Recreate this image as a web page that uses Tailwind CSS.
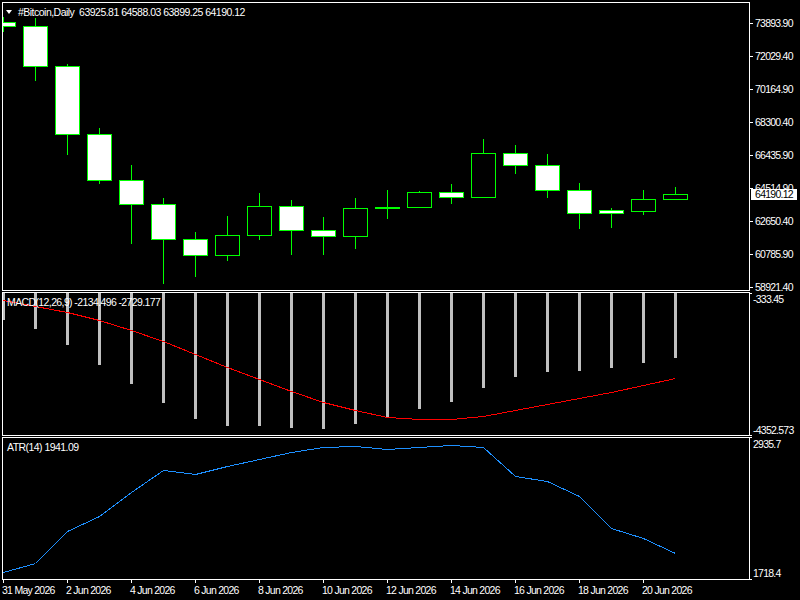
<!DOCTYPE html>
<html lang="en">
<head>
    <meta charset="UTF-8">
    <title>#Bitcoin,Daily</title>
    <script src="https://cdn.jsdelivr.net/npm/@tailwindcss/browser@4"></script>
</head>
<body class="bg-black">
    <div class="w-[800px] h-[600px] bg-black pt-[2px] text-white text-[10.5px] leading-none tracking-[-0.55px] font-['Liberation_Sans',sans-serif] overflow-hidden">

        <!-- Price panel -->
        <div class="flex h-[289px] mb-px">
            <div class="relative w-[748px] ml-[2px] border border-white">
                <div class="absolute left-[3px] top-[4px] flex items-center gap-[6px] whitespace-pre tracking-[-0.52px]">
                    <span class="w-0 h-0 border-x-[3.5px] border-x-transparent border-t-[4px] border-t-white"></span>
                    <span>#Bitcoin,Daily  63925.81 64588.03 63899.25 64190.12</span>
                </div>
                <svg width="746" height="287" viewBox="3 3 746 287" shape-rendering="crispEdges" class="block">
                    <path stroke="#00ff00" fill="none" d="M3.5 17V32M35.5 18V81M67.5 64V155M99.5 128V184M131.5 165V244M163.5 198V284M195.5 232V277M227.5 216V261M259.5 193V240M291.5 200V255M323.5 217V255M355.5 198V249M387.5 190V219M419.5 191V208M451.5 184V204M483.5 139V198M515.5 145V174M547.5 154V198M579.5 183V229M611.5 208V228M643.5 190V215M675.5 187V200"/>
                    <g stroke="#00ff00" fill="#ffffff">
                        <rect x="-8.5" y="22.5" width="24" height="4"/>
                        <rect x="23.5" y="26.5" width="24" height="40"/>
                        <rect x="55.5" y="66.5" width="24" height="68"/>
                        <rect x="87.5" y="134.5" width="24" height="46"/>
                        <rect x="119.5" y="180.5" width="24" height="24"/>
                        <rect x="151.5" y="204.5" width="24" height="35"/>
                        <rect x="183.5" y="239.5" width="24" height="16"/>
                        <rect x="279.5" y="206.5" width="24" height="24"/>
                        <rect x="311.5" y="230.5" width="24" height="6"/>
                        <rect x="439.5" y="192.5" width="24" height="5"/>
                        <rect x="503.5" y="153.5" width="24" height="12"/>
                        <rect x="535.5" y="165.5" width="24" height="25"/>
                        <rect x="567.5" y="190.5" width="24" height="23"/>
                        <rect x="599.5" y="210.5" width="24" height="3"/>
                    </g>
                    <g stroke="#00ff00" fill="#000000">
                        <rect x="215.5" y="235.5" width="24" height="20"/>
                        <rect x="247.5" y="206.5" width="24" height="29"/>
                        <rect x="343.5" y="208.5" width="24" height="28"/>
                        <rect x="375.5" y="207.5" width="24" height="1"/>
                        <rect x="407.5" y="192.5" width="24" height="15"/>
                        <rect x="471.5" y="153.5" width="24" height="44"/>
                        <rect x="631.5" y="199.5" width="24" height="12"/>
                        <rect x="663.5" y="194.5" width="24" height="5"/>
                    </g>
                </svg>
            </div>
            <div class="relative flex-1 pt-[5px] tracking-[-0.75px]">
                <div class="flex items-center h-[33px] gap-[2px]"><span class="w-[3px] h-px bg-white"></span><span>73893.90</span></div>
                <div class="flex items-center h-[33px] gap-[2px]"><span class="w-[3px] h-px bg-white"></span><span>72029.40</span></div>
                <div class="flex items-center h-[33px] gap-[2px]"><span class="w-[3px] h-px bg-white"></span><span>70164.90</span></div>
                <div class="flex items-center h-[33px] gap-[2px]"><span class="w-[3px] h-px bg-white"></span><span>68300.40</span></div>
                <div class="flex items-center h-[33px] gap-[2px]"><span class="w-[3px] h-px bg-white"></span><span>66435.90</span></div>
                <div class="flex items-center h-[33px] gap-[2px]"><span class="w-[3px] h-px bg-white"></span><span>64514.90</span></div>
                <div class="flex items-center h-[33px] gap-[2px]"><span class="w-[3px] h-px bg-white"></span><span>62650.40</span></div>
                <div class="flex items-center h-[33px] gap-[2px]"><span class="w-[3px] h-px bg-white"></span><span>60785.90</span></div>
                <div class="flex items-center h-[33px] gap-[2px]"><span class="w-[3px] h-px bg-white"></span><span>58921.40</span></div>
                <!-- current price tag -->
                <div class="absolute left-px top-[187px] w-[46px] h-[11px] bg-white text-black flex items-center justify-center">64190.12</div>
            </div>
        </div>

        <!-- MACD panel -->
        <div class="flex h-[144px] mb-px">
            <div class="relative w-[748px] ml-[2px] border border-white">
                <svg width="746" height="142" viewBox="3 293 746 142" shape-rendering="crispEdges" class="block">
                    <path stroke="#c0c0c0" stroke-width="3" fill="none" d="M3.5 293V320M35.5 293V329M67.5 293V345M99.5 293V365M131.5 293V384M163.5 293V403M195.5 293V419M227.5 293V426M259.5 293V426M291.5 293V428M323.5 293V429M355.5 293V424M387.5 293V418M419.5 293V409M451.5 293V402M483.5 293V388M515.5 293V377M547.5 293V372M579.5 293V371M611.5 293V368M643.5 293V363M675.5 293V358"/>
                    <polyline stroke="#ff0000" fill="none" points="3.5,300.5 35.5,306.5 67.5,312.5 99.5,320.5 131.5,330.5 163.5,341.5 195.5,354.5 227.5,367.5 259.5,379.5 291.5,391.5 323.5,402.5 355.5,410.5 387.5,417.5 419.5,419.5 451.5,419.5 483.5,416.5 515.5,410.5 547.5,404.5 579.5,398.5 611.5,392.5 643.5,385.5 675.5,378.5"/>
                </svg>
                <span class="absolute left-[4px] top-[4px] whitespace-nowrap tracking-[-0.61px]">MACD(12,26,9) -2134.496 -2729.177</span>
            </div>
            <div class="relative flex-1 tracking-[-0.75px]">
                <span class="absolute left-0 top-px w-[2px] h-px bg-white"></span>
                <span class="absolute left-[3px] top-[2px]">-333.45</span>
                <span class="absolute left-[3px] bottom-[1px]">-4352.573</span>
                <span class="absolute left-0 bottom-0 w-[2px] h-px bg-white"></span>
            </div>
        </div>

        <!-- ATR panel -->
        <div class="flex h-[143px]">
            <div class="relative w-[748px] ml-[2px] border border-white">
                <svg width="746" height="141" viewBox="3 438 746 141" shape-rendering="crispEdges" class="block">
                    <polyline stroke="#1e90ff" fill="none" points="3.5,572.5 35.5,563.5 67.5,531.5 99.5,516.5 131.5,492.5 163.5,470.5 195.5,474.5 227.5,466.5 259.5,459.5 291.5,452.5 323.5,447.5 355.5,446.5 387.5,449.5 419.5,447.5 451.5,445.5 483.5,447.5 515.5,476.5 547.5,481.5 579.5,496.5 611.5,528.5 643.5,538.5 675.5,553.5"/>
                </svg>
                <span class="absolute left-[4px] top-[4px] whitespace-nowrap">ATR(14) 1941.09</span>
            </div>
            <div class="relative flex-1 tracking-[-0.75px]">
                <span class="absolute left-0 top-0 w-[2px] h-px bg-white"></span>
                <span class="absolute left-[3px] top-[2px]">2935.7</span>
                <span class="absolute left-[3px] bottom-[2px]">1718.4</span>
                <span class="absolute left-0 bottom-0 w-[2px] h-px bg-white"></span>
            </div>
        </div>

        <!-- Date axis -->
        <div class="flex pl-[3px] whitespace-nowrap tracking-[-0.73px]">
            <div class="w-[64px]"><div class="w-px h-[3px] bg-white"></div><div class="mt-[2px] -ml-px">31 May 2026</div></div>
            <div class="w-[64px]"><div class="w-px h-[3px] bg-white"></div><div class="mt-[2px] -ml-px">2 Jun 2026</div></div>
            <div class="w-[64px]"><div class="w-px h-[3px] bg-white"></div><div class="mt-[2px] -ml-px">4 Jun 2026</div></div>
            <div class="w-[64px]"><div class="w-px h-[3px] bg-white"></div><div class="mt-[2px] -ml-px">6 Jun 2026</div></div>
            <div class="w-[64px]"><div class="w-px h-[3px] bg-white"></div><div class="mt-[2px] -ml-px">8 Jun 2026</div></div>
            <div class="w-[64px]"><div class="w-px h-[3px] bg-white"></div><div class="mt-[2px] -ml-px">10 Jun 2026</div></div>
            <div class="w-[64px]"><div class="w-px h-[3px] bg-white"></div><div class="mt-[2px] -ml-px">12 Jun 2026</div></div>
            <div class="w-[64px]"><div class="w-px h-[3px] bg-white"></div><div class="mt-[2px] -ml-px">14 Jun 2026</div></div>
            <div class="w-[64px]"><div class="w-px h-[3px] bg-white"></div><div class="mt-[2px] -ml-px">16 Jun 2026</div></div>
            <div class="w-[64px]"><div class="w-px h-[3px] bg-white"></div><div class="mt-[2px] -ml-px">18 Jun 2026</div></div>
            <div class="w-[64px]"><div class="w-px h-[3px] bg-white"></div><div class="mt-[2px] -ml-px">20 Jun 2026</div></div>
        </div>
    </div>
</body>
</html>
